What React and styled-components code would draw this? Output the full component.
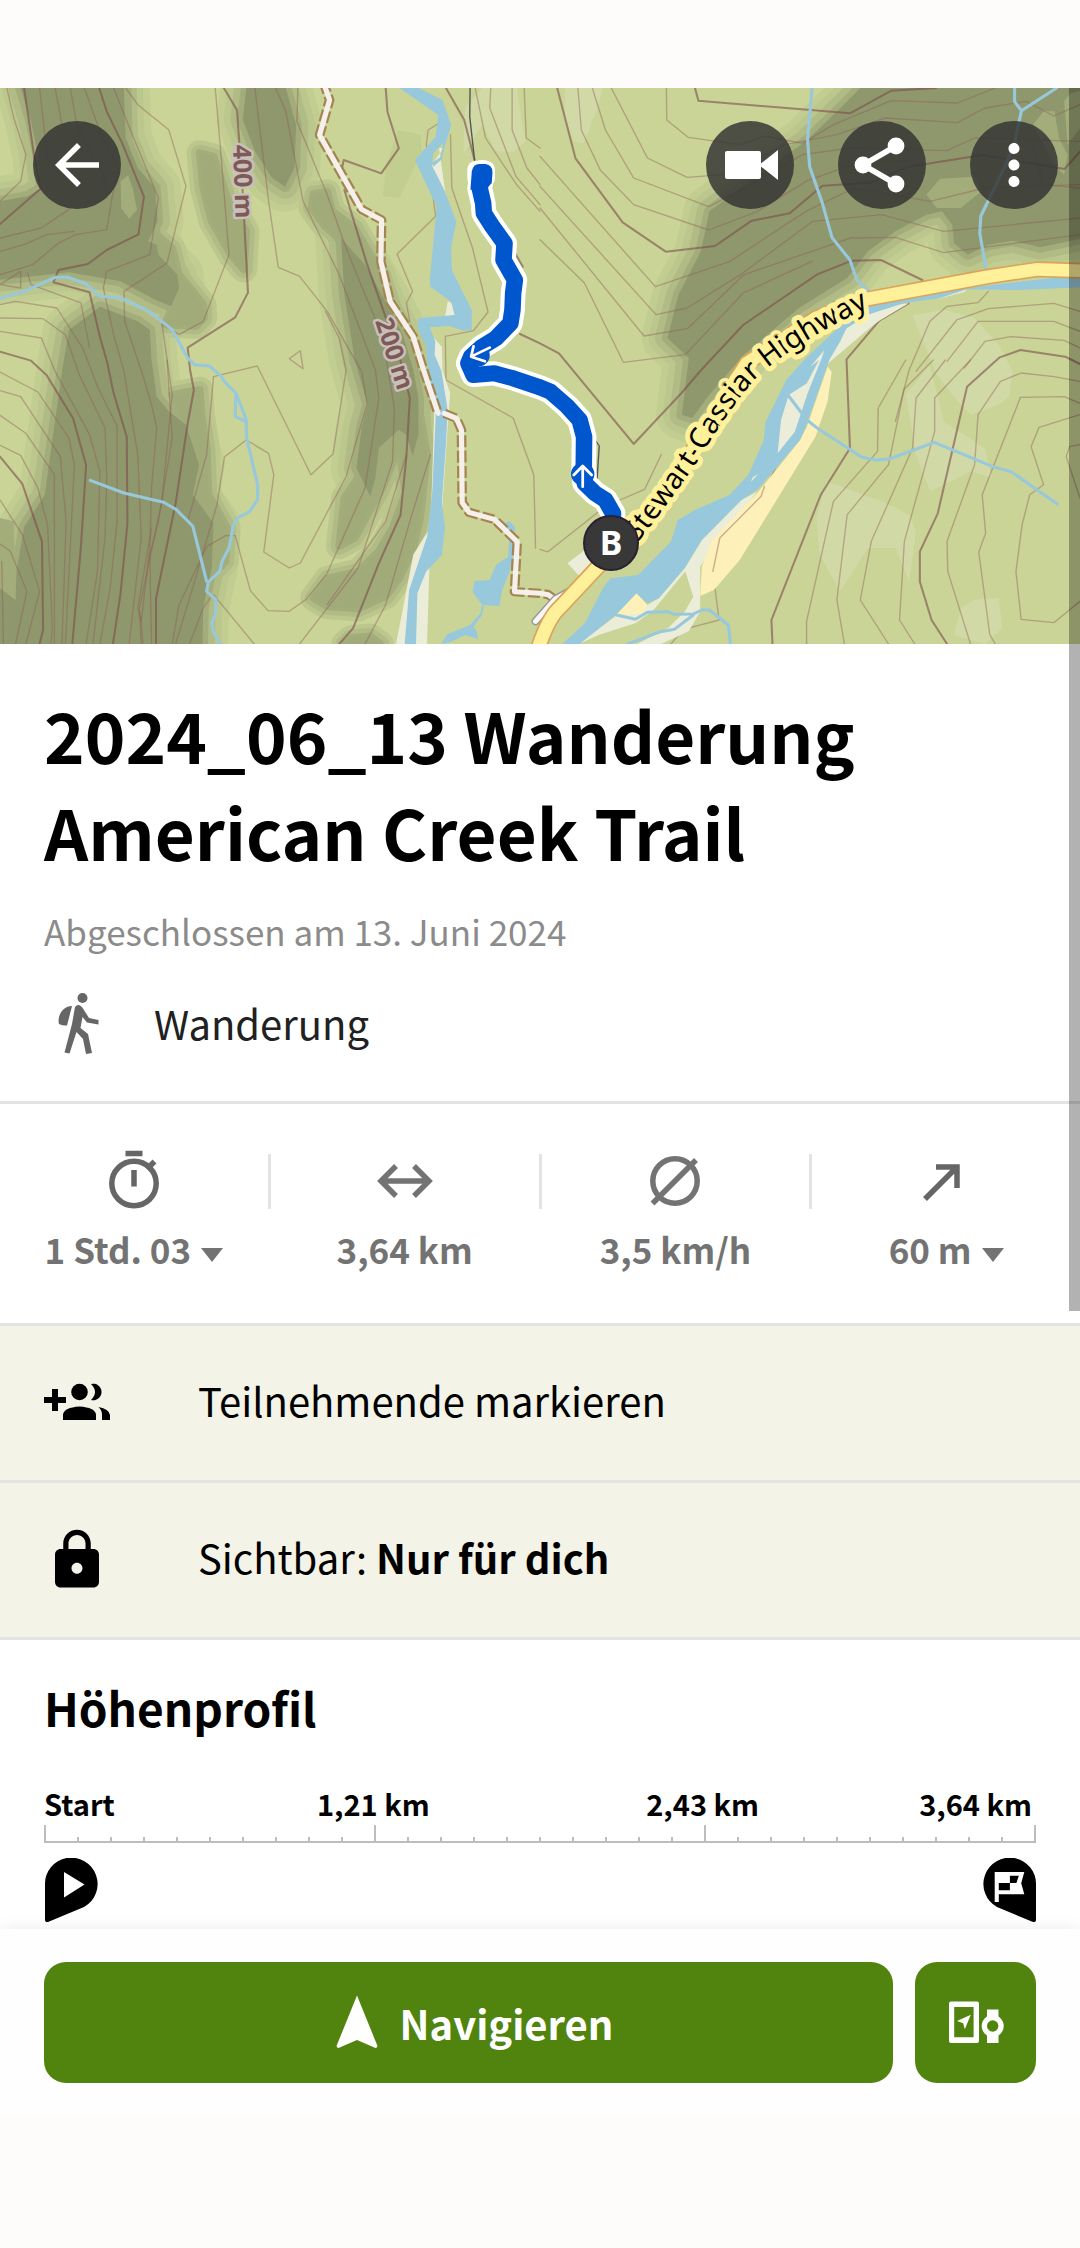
import React from 'react'
import styled, { createGlobalStyle } from 'styled-components'
import { MdArrowBack, MdLock, MdMoreVert } from 'react-icons/md'

const GlobalStyle = createGlobalStyle`
  * {
    box-sizing: border-box;
  }

  body {
    margin: 0;
    background-color: #fdfcfa;
    color: #000;
    font-family: "Noto Sans CJK SC", "Noto Sans", sans-serif;
  }
`

const Screen = styled.main`
  position: relative;
  padding: 88px 0 132px;
`

const Hero = styled.header`
  position: relative;
  height: 556px;
  overflow: hidden;
`

const MapSvg = styled.svg`
  display: block;
  width: 100%;
  height: 100%;
`

const Toolbar = styled.nav`
  position: absolute;
  top: 33px;
  left: 33px;
  right: 22px;
  display: flex;
  gap: 44px;
`

const RoundButton = styled.button`
  display: flex;
  align-items: center;
  justify-content: center;
  width: 88px;
  height: 88px;
  padding: 0;
  margin-right: ${props => props.$push ? "auto" : "0"};
  border: none;
  border-radius: 50%;
  background-color: rgba(52, 52, 52, 0.83);
  color: white;
  cursor: pointer;
`

const ScrollThumb = styled.div`
  position: absolute;
  top: 88px;
  right: 0;
  width: 11px;
  height: 1223px;
  background-color: rgba(0, 0, 0, 0.3);
`

const Info = styled.section`
  padding: 42px 44px 45px;
  background-color: white;
  border-bottom: 3px solid #e3e3e3;
`

const Title = styled.h1`
  max-width: 900px;
  margin: 0;
  font-size: 69px;
  line-height: 97px;
  font-weight: 700;
`

const Finished = styled.p`
  margin: 25px 0 33px;
  color: #8b8b8b;
  font-size: 35px;
  line-height: 52px;
`

const Activity = styled.div`
  display: flex;
  align-items: center;
  gap: 44px;
  color: #212121;
  font-size: 40px;
  line-height: 64px;
`

const Stats = styled.section`
  display: flex;
  padding: 43px 0 44px;
  background-color: white;
  border-bottom: 3px solid #e3e3e3;
  color: #737373;
`

const Stat = styled.div`
  flex: 1;
  display: flex;
  flex-direction: column;
  align-items: center;
  gap: 6px;
`

const StatDivider = styled.div`
  width: 3px;
  height: 55px;
  margin-top: 7px;
  background-color: #e3e3e3;
`

const StatValue = styled.div`
  display: flex;
  align-items: center;
  gap: 10px;
  font-size: 35px;
  line-height: 60px;
  font-weight: 700;
`

const StatButton = styled(StatValue).attrs({ as: "button", type: "button" })`
  padding: 0;
  border: none;
  background: none;
  color: inherit;
  font-family: inherit;
  cursor: pointer;

  svg {
    margin-top: 12px;
  }
`

const Option = styled.button`
  display: flex;
  align-items: center;
  gap: 88px;
  width: 100%;
  height: 157px;
  padding: 0 44px;
  border: none;
  border-bottom: 3px solid #e3e3e3;
  background-color: #f4f3e7;
  color: #000;
  font-family: inherit;
  font-size: 40px;
  line-height: 56px;
  text-align: left;
  cursor: pointer;
`

const OptionText = styled.span`
  padding-bottom: 6px;
`

const Profile = styled.section`
  padding: 35px 44px 7px;
  background-color: white;
`

const SubTitle = styled.h2`
  margin: 0 0 44px;
  font-size: 46px;
  line-height: 64px;
  font-weight: 700;
`

const AxisLabels = styled.div`
  display: grid;
  grid-template-columns: 1fr 2fr 2fr 1fr;
  padding-right: 4px;
  font-size: 29px;
  line-height: 40px;
  font-weight: 700;
  text-align: center;
  white-space: nowrap;

  span:first-child {
    text-align: left;
  }

  span:last-child {
    justify-self: end;
  }
`

const Axis = styled.div`
  display: flex;
  align-items: flex-end;
  justify-content: space-between;
  height: 19px;
  margin-top: 1px;
  border-bottom: 2px solid #bdbdbd;
`

const Tick = styled.div`
  width: 2px;
  height: ${props => props.$major ? "16px" : "4px"};
  background-color: #bdbdbd;
`

const Markers = styled.div`
  display: flex;
  justify-content: space-between;
  margin-top: 15px;
  padding-left: 1px;

  svg {
    display: block;
  }
`

const BottomBar = styled.footer`
  position: relative;
  display: flex;
  gap: 22px;
  padding: 33px 44px;
  background-color: #fefefe;
  box-shadow: 0 0 16px rgba(0, 0, 0, 0.08);
  clip-path: inset(-20px 0 0 0);
`

const GreenButton = styled.button`
  display: flex;
  align-items: center;
  justify-content: center;
  gap: 10px;
  flex: ${props => props.$wide ? "1" : "0 0 121px"};
  height: 121px;
  padding: 0;
  border: none;
  border-radius: 22px;
  background-color: #50840e;
  color: white;
  font-family: inherit;
  font-size: 40px;
  line-height: 56px;
  font-weight: 700;
  cursor: pointer;
`

/* ---------- map data, in terrain units (3136 x 1668) ---------- */

const ridges = [
  "M60 0 L360 0 L365 150 L400 240 L450 300 L458 400 L430 460 L455 470 L460 500 L515 560 L520 600 L497 655 L450 635 L350 580 L200 553 L0 575 L0 340 L80 325 L120 300 L110 200 L90 100Z",
  "M290 656 L400 700 L435 726 L440 816 L455 926 L490 970 L540 1010 L578 1130 L560 1220 L620 1306 L615 1440 L590 1560 L588 1668 L0 1668 L0 1500 L45 1535 L48 1450 L70 1316 L130 1220 L150 1070 L180 850 L200 726Z",
  "M715 0 L830 0 L860 110 L855 240 L828 296 L790 270 L740 190 L705 95Z",
  "M990 450 L1060 530 L1120 640 L1170 740 L1200 846 L1215 930 L1215 1040 L1198 1105 L1180 1040 L1158 1025 L1100 1080 L1090 1170 L1075 1225 L1035 1140 L1050 1020 L1068 950 L1030 816 L1000 620Z",
  "M2498 0 L2450 50 L2340 160 L2190 270 L2060 370 L2035 490 L1970 620 L1938 750 L2000 810 L1980 980 L2010 990 L2060 920 L2160 800 L2320 660 L2460 570 L2520 490 L2600 430 L2690 380 L2735 370 L2765 410 L2770 465 L2810 500 L2870 470 L2940 458 L3020 478 L3150 450 L3150 0Z",
]

const slopes = [
  "M370 0 L375 190 L440 290 L455 440 L500 480 L520 560 L590 650 L592 690 L570 714 L480 710 L500 655 L460 500 L360 240Z",
  "M580 195 L620 205 L660 330 L715 430 L708 545 L670 500 L615 400 L590 300Z",
  "M905 360 L910 318 L950 312 L965 370 L1030 420 L1110 560 L1150 690 L1000 470 L940 410Z",
  "M985 1375 L1030 1350 L1110 1200 L1158 1080 L1178 1215 L1140 1320 L1100 1390 L1040 1450 L950 1472 L910 1530 L950 1555 L1040 1562 L1120 1525 L1160 1470 L1200 1380 L1220 1290 L1240 1100 L1215 950 L1180 1000 L1110 1060 L1000 1230Z",
  "M1000 1668 L1020 1650 L1075 1645 L1105 1668Z",
  "M500 920 L580 905 L585 980 L600 1080 L605 1220 L660 1320 L655 1420 L600 1480 L560 1200 L530 1000Z",
]

const slopeBands = [
  { color: "#c2cd91", width: 150 },
  { color: "#bcc78d", width: 110 },
  { color: "#b1bb85", width: 72 },
  { color: "#a3ad7b", width: 32 },
]

const lightPatches = [
  "M1640 0 L1750 0 L1735 60 L1695 165 L1665 160 L1640 90Z",
  "M1400 0 L1500 0 L1525 160 L1490 192 L1440 190 L1400 110 L1345 200 L1350 60Z",
  "M2650 682 L2740 665 L2830 690 L2900 770 L2940 850 L2930 925 L2900 950 L2820 980 L2780 940 L2720 860Z",
  "M2370 1290 L2400 1180 L2560 1240 L2640 1280 L2660 1330 L2640 1480 L2600 1380 L2520 1380 L2440 1510 L2380 1400Z",
  "M2790 1560 L2830 1535 L2900 1530 L2910 1620 L2860 1668 L2770 1640Z",
  "M2630 920 L2700 830 L2740 1000 L2860 1080 L2880 1170 L2820 1150 L2700 1210 L2660 1100Z",
]

const indexContours = [
  "M70 0 L97 190 L118 302 L0 408",
  "M288 0 L310 71 L355 166 L418 326 L402 439 L310 486 L255 528 L170 546 L155 583 L260 613 L290 746 L312 826 L330 916 L368 1046 L370 1306 L350 1516 L328 1668",
  "M650 0 L688 66 L695 166 L705 316 L712 456 L720 614 L683 688 L545 779 L552 846 L563 906 L545 1006 L510 1246 L453 1531 L453 1668",
  "M0 791 L90 818 L135 861 L212 991 L250 1131 L235 1376 L210 1668",
  "M0 1106 L65 1188 L122 1361 L125 1626 L115 1668",
  "M1000 306 L1065 526 L1160 806 L1190 931 L1180 1106 L1163 1281 L1100 1426 L1025 1621 L985 1668",
  "M1120 0 L1125 71 L1158 181 L1107 256 L998 216 L993 241",
  "M1295 0 L1348 96 L1378 216",
  "M1490 486 L1518 536",
  "M1510 738 L1568 766 L1623 796 L1840 1068 L1978 916 L2036 846 L2158 711 L2373 559 L2473 518 L2558 516 L2678 576",
  "M1618 0 L1671 211 L1808 403 L1933 491 L2076 474 L2183 398 L2293 376 L2388 293 L2528 284 L2638 236 L2853 201 L3091 243 L3136 191",
  "M2018 0 L2028 38 L2468 76 L2588 8 L2718 0",
  "M2638 646 L2553 698 L2458 814 L2468 1081 L2383 1221 L2240 1596 L2243 1668",
  "M3136 828 L3093 806 L2963 786 L2903 808 L2808 896 L2723 1276 L2671 1391 L2671 1481 L2705 1596 L2750 1668",
]

const contours = [
  "M20 0 L40 90 L75 200 L60 280 L0 340",
  "M115 0 L130 140 L140 220",
  "M160 0 L180 110",
  "M204 0 L225 120 L300 260 L310 330 L220 350 L120 420 L0 450",
  "M245 0 L290 130 L345 240 L325 330 L310 425 L220 440 L170 465 L95 530 L0 560",
  "M365 0 L400 50 L490 125 L540 295 L485 525 L360 610 L362 700 L410 846 L440 950 L455 1020 L440 1200 L435 1380 L410 1600 L415 1668",
  "M330 0 L400 180 L460 330 L435 500 L310 550 L300 600 L330 740 L360 850 L400 1100 L410 1350 L375 1668",
  "M0 490 L70 470 L135 440 L215 430",
  "M80 555 L90 590 L235 645 L260 780",
  "M0 590 L60 600 L60 550Z",
  "M0 650 L45 640 L165 660 L240 780 L285 900 L340 1015 L340 1300 L320 1500 L290 1668",
  "M0 690 L125 692 L190 740 L230 860 L305 1020 L310 1170 L305 1350 L270 1668",
  "M0 730 L120 750 L160 850 L260 1040 L290 1150 L283 1450 L250 1668",
  "M0 852 L110 912 L200 1050 L216 1130 L190 1668",
  "M0 908 L60 926 L175 1105 L192 1300 L180 1668",
  "M0 982 L75 1036 L158 1160 L158 1668",
  "M0 1072 L60 1102 L110 1200 L138 1310 L152 1620 L148 1668",
  "M0 1236 L65 1340 L115 1510 L75 1668",
  "M0 1368 L30 1390 L78 1510 L45 1668",
  "M10 1668 L5 1420",
  "M485 816 L500 1050 L460 1300 L435 1400 L440 1668",
  "M625 0 L640 180 L665 500 L590 700 L520 740 L470 706 L500 920 L470 1240 L405 1560 L410 1668",
  "M410 1600 L400 1560 L440 1320",
  "M500 1668 L520 1550 L600 1376 L655 1343 L683 1343 L727 1508 L778 1568 L840 1570 L888 1535 L950 1456 L1060 1200 L1100 930 L1090 846 L985 560 L880 340 L830 70 L800 0",
  "M620 1520 L738 1668",
  "M550 1668 L590 1560 L610 1530",
  "M510 1668 L565 1480 L630 1250 L652 1106 L715 1056 L780 1096 L795 1160 L766 1392 L840 1440 L872 1425 L1005 1166 L1066 948 L1050 850 L950 670 L870 565 L808 538 L780 340 L740 0",
  "M545 1300 L600 1100 L620 866 L747 834 L903 1160 L967 1098 L1005 846 L985 750 L945 670",
  "M865 0 L862 100 L950 320 L1005 480 L1060 620 L1110 740 L1145 960 L1140 1120 L1040 1440 L870 1668",
  "M1180 1100 L1120 1300 L950 1550",
  "M1250 1100 L1190 1300 L1120 1550 L1060 1668",
  "M840 812 L872 788 L880 842Z",
  "M1275 105 L1243 126 L1238 170 L1265 385 L1153 498 L1198 610 L1180 645 L1190 700",
  "M1308 140 L1312 300 L1372 480 L1417 672 L1375 728 L1293 745 L1295 876 L1490 990 L1550 1160 L1555 1380",
  "M1380 0 L1410 150 L1500 290 L1568 370",
  "M1425 0 L1422 60 L1498 265 L1568 350",
  "M1487 0 L1487 126 L1530 240 L1568 290",
  "M1522 0 L1528 150 L1568 180",
  "M1678 0 L1688 126 L1743 246 L1840 350 L2058 426 L2200 370 L2340 280 L2500 220 L2640 220",
  "M1720 0 L1758 126 L1840 270 L2058 356 L2180 290 L2330 200 L2470 180 L2750 188 L2830 150 L3136 160",
  "M1775 0 L1880 210 L1995 268 L2100 260 L2280 170 L2430 140 L2570 90 L2780 104 L2860 60 L2980 40 L3060 84 L3136 50",
  "M1935 0 L1936 96 L1998 148 L2150 170 L2220 144 L2330 166 L2420 110 L2588 38 L2780 45 L2890 0",
  "M1568 205 L1903 596 L2120 520 L2340 370 L2480 300 L2700 340 L2860 300 L3136 290",
  "M1568 295 L1905 680 L1995 660 L2150 560 L2360 400 L2560 380 L2740 430 L3136 390",
  "M1568 360 L1870 744 L1996 722 L2160 560 L2470 450 L2600 448 L2740 494 L3136 440",
  "M1568 455 L1697 585 L1810 823 L1990 800 L2158 615 L2358 520",
  "M2420 640 L2510 660 L2610 620",
  "M3000 180 L3030 290 L3136 300",
  "M2600 1000 L2640 846 L2700 700 L2750 655 L2840 644 L2870 610",
  "M2630 816 L2550 960 L2548 1090 L2420 1240 L2342 1600 L2342 1668",
  "M2710 816 L2625 904 L2580 1130 L2460 1280 L2430 1536 L2452 1668",
  "M2745 816 L2660 930 L2650 1080 L2530 1360 L2498 1536 L2580 1668",
  "M2818 816 L2714 930 L2714 1030 L2626 1360 L2612 1596 L2656 1668",
  "M3136 670 L3060 646 L2870 662 L2778 696 L2660 850",
  "M3136 730 L3060 700 L2840 700 L2750 820",
  "M3136 780 L3090 757 L2935 746 L2860 760 L2800 840",
  "M3136 880 L3060 866 L2965 855 L2905 880 L2840 980 L2830 1130 L2750 1360 L2752 1450 L2818 1668",
  "M3136 946 L3090 926 L2963 928 L2852 1220 L2862 1336 L2842 1392 L2874 1640 L2890 1668",
  "M3136 980 L3017 1018 L2994 1076 L3030 1190 L2990 1220 L2968 1310 L2950 1450 L2965 1594 L3060 1604 L3136 1540",
  "M3136 1070 L3106 1075 L3096 1106 L3136 1230",
  "M1568 1384 L1590 1392 L1740 1270 L1800 1236 L1872 1204 L1920 1100",
  "M2350 816 L2270 1100 L2215 1220 L2090 1350 L2070 1450 L2088 1596 L1985 1624 L1948 1668",
]

const streams = [
  "M0 632 L70 610 L160 568 L195 567 L250 588 L290 625 L350 630 L430 668 L500 725 L545 810 L565 830 L608 834 L640 862 L655 885 L685 915 L715 995 L716 1050 L748 1190 L748 1235 L725 1270 L690 1290 L678 1310 L665 1380 L645 1420 L638 1450 L605 1482 L600 1510 L627 1535 L625 1580 L615 1605 L620 1635 L640 1668",
  "M685 920 L683 985 L712 1000",
  "M262 1177 L360 1215 L475 1243 L512 1265 L560 1315 L600 1480",
  "M1790 1581 L1845 1594 L1880 1573 L1938 1571 L1958 1579 L2013 1578 L2038 1566 L2060 1566 L2115 1611 L2121 1668",
  "M2013 1581 L1958 1624 L1918 1631 L1823 1668",
  "M2288 921 L2343 996 L2378 1024 L2503 1108 L2543 1116 L2583 1113 L2713 1063 L2888 1138 L2936 1151 L3070 1248",
  "M2358 0 L2345 156 L2351 236 L2388 346 L2416 449 L2468 516 L2488 576 L2523 611",
  "M2946 0 L2946 41 L2966 68 L3068 0",
  "M2966 68 L2946 166 L2913 246 L2848 384 L2845 436 L2864 548",
]

const gravel = [
  "M1288 180 L1250 236 L1298 350 L1275 180Z",
  "M1300 640 L1320 650 L1320 690 L1290 700Z",
  "M1260 750 L1283 776 L1285 846 L1307 916 L1300 1016 L1284 1260 L1200 1400 L1150 1668 L1240 1668 L1260 1000Z",
  "M2638 646 L2558 656 L2458 721 L2370 816 L2293 906 L2258 1096 L2308 1031 L2400 830 L2553 696Z",
  "M2198 1211 L2153 1236 L2038 1356 L1988 1441 L1913 1531 L1850 1570 L1788 1584 L1680 1668 L1740 1640 L1845 1606 L1898 1566 L1990 1450 L2013 1526 L1988 1571 L1940 1620 L1850 1668 L1920 1668 L2000 1630 L2033 1571 L2033 1436 L2088 1356Z",
  "M1648 1426 L1698 1386 L1728 1426 L1688 1471Z",
  "M2800 612 L2808 604 L2720 625 L2725 632Z",
]

const sand = [
  "M2403 836 L2415 851 L2403 941 L2368 1046 L2148 1416 L2073 1506 L2033 1524 L2038 1436 L2068 1356 L2198 1216 L2258 1141 L2323 1056 L2343 1016Z",
  "M1848 1516 L1880 1551 L1868 1576 L1788 1581Z",
]

const water = [
  "M1160 0 L1215 0 L1285 36 L1310 111 L1290 180 L1283 214 L1258 236 L1255 224 L1280 206 L1287 165 L1258 195 L1255 234 L1290 306 L1325 401 L1310 476 L1312 546 L1345 616 L1370 666 L1370 726 L1345 728 L1305 714 L1248 718 L1264 761 L1262 800 L1282 850 L1300 966 L1295 1066 L1283 1246 L1292 1316 L1283 1401 L1237 1451 L1212 1516 L1208 1668 L1175 1668 L1188 1506 L1240 1346 L1255 1216 L1265 986 L1240 816 L1238 776 L1212 716 L1215 691 L1320 681 L1310 641 L1250 596 L1248 576 L1268 356 L1205 216 L1265 146 L1273 81Z",
  "M1465 1306 L1480 1300 L1495 1316 L1495 1386 L1478 1456 L1458 1506 L1450 1554 L1405 1551 L1400 1581 L1375 1616 L1385 1631 L1388 1654 L1350 1641 L1310 1661 L1280 1668 L1300 1638 L1365 1611 L1395 1576 L1400 1551 L1372 1511 L1378 1479 L1422 1476 L1440 1431 L1475 1406 L1480 1336Z",
  "M2808 600 L3136 560 L3136 598 L2958 606 L2808 604 L2728 631 L2628 644 L2520 680 L2458 721 L2440 760 L2408 816 L2338 1021 L2323 1056 L2253 1141 L2198 1206 L2153 1236 L2038 1356 L1988 1441 L1913 1531 L1880 1546 L1848 1516 L1788 1581 L1683 1668 L1633 1668 L1698 1606 L1753 1496 L1773 1471 L1853 1461 L1948 1361 L1968 1296 L2018 1266 L2118 1221 L2173 1161 L2218 1056 L2223 1001 L2283 876 L2340 810 L2448 706 L2498 660Z",
]

// light gravel bars lying inside the river bed
const bars = [
  "M2394 786 L2353 836 L2378 816 L2343 886 L2290 921 L2268 996 L2258 1096 L2308 1031 L2345 916 L2384 816Z",
  "M2458 730 L2530 685 L2638 646 L2553 698 L2420 800Z",
  "M2180 1182 L2186 1168 L2202 1158Z",
]

const dirtRoad = "M938 -20 L957 36 L928 141 L1050 364 L1108 396 L1106 521 L1133 641 L1200 746 L1228 840 L1272 976 M1290 976 L1325 991 L1340 1026 L1342 1244 L1362 1273 L1435 1294 L1502 1361 L1494 1511 L1568 1516 L1592 1520 L1613 1536"

const highway = "M3160 549 L3013 544 L2868 566 L2518 633 L2370 690 L2168 826 L2088 956 L1988 1126 L1898 1246 L1818 1346 L1628 1556 Q1590 1590 1560 1690"

const route = "M1400 252 L1393 301 L1403 346 L1405 376 L1430 416 L1465 466 L1462 516 L1495 576 L1490 616 L1488 666 L1482 706 L1440 751 L1400 776 L1368 806 L1360 826 L1375 861 L1435 856 L1490 871 L1568 898 L1598 911 L1648 956 L1683 996 L1696 1046 L1695 1146 L1698 1186 L1728 1216 L1758 1236 L1780 1276 L1776 1366"

const TourMap = () => {
  return (
    <MapSvg viewBox="0 0 1080 556" preserveAspectRatio="xMidYMid slice" role="img" aria-label="Karte">
      <defs>
        <path id="highwayLabel" d="M637 455 Q672 412 705 362 Q726 325 756 290 Q798 252 872 218" />
      </defs>
      <rect width="1080" height="556" fill="#c9d496" />
      <g transform="scale(.34439 .33333)" strokeLinejoin="round" strokeLinecap="round" fill="none">
        <path d="M1155 125 L1220 140 L1225 190 L1160 330 L1112 325 L1120 240Z" fill="#c2ce90" />
        {lightPatches.map(d => <path key={d} d={d} fill="#d1daa6" />)}
        {slopeBands.map(band => (
          <g key={band.color} stroke={band.color} strokeWidth={band.width}>
            {ridges.map(d => <path key={d} d={d} />)}
            {band.width < 120 && slopes.map(d => <path key={d} d={d} strokeWidth={band.width * 0.7} />)}
          </g>
        ))}
        {slopes.map(d => <path key={d} d={d} fill="#a1ab7a" />)}
        {ridges.map(d => <path key={d} d={d} fill="#8f986d" />)}
        <g fill="#a3ad7b">
          <path d="M2690 320 L2730 272 L2830 266 L2850 310 L2790 360 L2720 360Z" />
          <path d="M3000 110 L3030 70 L3062 70 L3075 150 L3100 200 L3090 260 L3060 230Z" />
          <path d="M3090 40 L3110 15 L3136 10 L3136 120 L3100 170Z" />
          <path d="M350 280 L372 262 L385 300 L398 365 L375 392 L352 360Z" />
          <path d="M0 1290 L40 1300 L45 1535 L0 1500Z" />
        </g>
        <g stroke="#8d5a55" strokeOpacity="0.42" strokeWidth="4">
          {contours.map(d => <path key={d} d={d} />)}
        </g>
        <g stroke="#7d4d4b" strokeOpacity="0.6" strokeWidth="6">
          {indexContours.map(d => <path key={d} d={d} />)}
        </g>
        {gravel.map(d => <path key={d} d={d} fill="#ebedd8" />)}
        {sand.map(d => <path key={d} d={d} fill="#fdf0b9" />)}
        {water.map(d => <path key={d} d={d} fill="#97c8dc" />)}
        {bars.map(d => <path key={d} d={d} fill="#ebedd8" />)}
        <g stroke="#97c8dc" strokeWidth="9">
          {streams.map(d => <path key={d} d={d} />)}
        </g>
        <path d="M2220 1195 L2210 1225 L2090 1350 L2070 1450" stroke="#a06a5e" strokeOpacity="0.5" strokeWidth="4" />
        <path d={dirtRoad} stroke="#a4854f" strokeWidth="28" strokeDasharray="36 10" strokeLinecap="butt" />
        <path d={dirtRoad} stroke="#f6f0ec" strokeWidth="15" />
        <path d="M1555 1600 L1613 1533 L1680 1495" stroke="#999" strokeWidth="24" />
        <path d="M1555 1600 L1613 1533 L1680 1495" stroke="#f8f8f8" strokeWidth="15" />
        <path d={highway} stroke="#dca459" strokeWidth="48" />
        <path d={highway} stroke="#fff09a" strokeWidth="38" />
        <path d="M1365 0 L1364 86 L1378 216 M1728 1056 L1740 1074 L1733 1186" stroke="#555" strokeWidth="4" />
        <path d={route} stroke="white" strokeWidth="72" />
        <rect x="1357" y="218" width="80" height="80" rx="26" fill="white" />
        <path d={route} stroke="#0056cc" strokeWidth="48" />
        <path d="M1392 228 L1410 228 Q1430 232 1430 252 L1428 285 L1410 305 L1366 305 L1370 250 Q1374 228 1392 228Z" fill="#0056cc" />
        <circle cx="1388" cy="802" r="34" fill="#0056cc" />
        <circle cx="1692" cy="1158" r="34" fill="#0056cc" />
        <g stroke="white" strokeWidth="8">
          <path d="M1422 779 L1368 806 M1375 775 L1368 806 L1408 820" />
          <path d="M1692 1196 L1692 1134 M1666 1161 L1692 1134 L1718 1161" />
        </g>
      </g>
      <g fontFamily="Noto Sans" strokeLinejoin="round" paintOrder="stroke">
        <g fontSize="25" fontWeight="700" fill="#7d5a56" stroke="#c9bfbb" strokeWidth="5">
          <text transform="translate(233 57) rotate(88)">400 m</text>
          <text transform="translate(375 233) rotate(72)">200 m</text>
        </g>
        <text fontSize="29" fill="#000" stroke="#fff09a" strokeWidth="10">
          <textPath href="#highwayLabel">Stewart-Cassiar Highway</textPath>
        </text>
      </g>
      <circle cx="611" cy="455" r="27" fill="#383838" stroke="#2a2033" strokeWidth="2" />
      <text x="611" y="467" textAnchor="middle" fontFamily="Noto Sans" fontSize="34" fontWeight="700" fill="white">B</text>
    </MapSvg>
  )
}

const Icon = ({ children, ...rest }) => (
  <svg width="66" height="66" viewBox="0 0 66 66" fill="none" aria-hidden="true" {...rest}>
    {children}
  </svg>
)

const VideoIcon = () => (
  <Icon fill="currentColor">
    <rect x="8" y="19" width="36" height="28" rx="2" />
    <path d="M42 33 L61 18 V48Z" />
  </Icon>
)

const ShareIcon = () => (
  <Icon fill="currentColor">
    <path d="M47 14 L14 33 L47 52" fill="none" stroke="currentColor" strokeWidth="5.5" />
    <circle cx="47" cy="14" r="8.4" />
    <circle cx="14" cy="33" r="8.4" />
    <circle cx="47" cy="52" r="8.4" />
  </Icon>
)

const HikerIcon = () => (
  <Icon fill="#666">
    <circle cx="38.5" cy="8" r="5" />
    <path d="M28 16 C18 16 13 27 15 34 Q19 36 23 35.500Z" />
    <path d="M31 17 Q34 13 38 17 L45 28 L54.500 30 L54.500 34.500 L43 32.500 L38.500 27 L36.500 38 L44 44 L48 63 L42 64 L39 49 L32.500 42 L25.500 63.500 L20.500 62.500 L28 34Z" />
  </Icon>
)

const TimerIcon = () => (
  <Icon stroke="#666" strokeWidth="5.5">
    <circle cx="33" cy="36.500" r="22.200" />
    <path d="M24.500 6.500 H41.500 M33 23 V39.500 M46 22 L53.500 14.500" />
  </Icon>
)

const DistanceIcon = () => (
  <Icon stroke="#737373" strokeWidth="5.5">
    <path d="M9 34 H57 M24 19 L9 34 L24 49 M42 19 L57 34 L42 49" />
  </Icon>
)

const AverageIcon = () => (
  <Icon stroke="#737373" strokeWidth="5.5">
    <circle cx="33" cy="34" r="22.200" />
    <path d="M10.500 56.500 L54 13" />
  </Icon>
)

const AscentIcon = () => (
  <Icon stroke="#666" strokeWidth="5.5">
    <path d="M23 20 H44 V41 M44 20 L12 52" />
  </Icon>
)

const Caret = () => (
  <svg width="22" height="14" viewBox="0 0 22 14" aria-hidden="true">
    <path d="M0 0 H22 L11 14Z" fill="#737373" />
  </svg>
)

const AddGroupIcon = () => (
  <Icon fill="currentColor" viewBox="0 3 66 66">
    <path d="M8 22 H14 V30 H22 V36 H14 V44 H8 V36 H0 V30 H8Z" />
    <circle cx="35.500" cy="25" r="8.300" />
    <path d="M47 17 A8.300 8.300 0 1 1 47 33 Q55 25 47 17Z" />
    <path d="M19 53 V47.500 Q20 40.500 35.500 39.500 Q51 40.500 52 47.500 V53Z" />
    <path d="M54.500 40 Q65 42 66 48 V53 H58 V48 Q58 43 54.500 40Z" />
  </Icon>
)

const StartPin = () => (
  <svg width="53" height="64" viewBox="0 0 53 64" aria-label="Start" role="img">
    <path d="M0 26.500 A26.300 26.300 0 1 1 39 49 L3 64 Q0 64.500 0 62Z" />
    <path d="M19 14 L39.500 26.500 L19 39.500Z" fill="white" />
  </svg>
)

const FinishPin = () => (
  <svg width="53" height="64" viewBox="0 0 53 64" aria-label="Ziel" role="img">
    <path d="M53 26.500 A26.300 26.300 0 1 0 14 49 L50 64 Q53 64.500 53 62Z" />
    <path d="M11.700 14 H41.300 L38.200 25.300 L41.300 36.300 H15.800 V44 H11.700Z" fill="white" />
    <path d="M26.900 17.700 H35.800 L33.400 25 H26.900Z M15.800 25 H26.900 V32.300 H15.800Z" />
  </svg>
)

const NavigateIcon = () => (
  <Icon fill="currentColor">
    <path d="M33 5.500 L53.500 56 Q53 58 51.500 58 L33 50 L14.500 58 Q13 58 12.500 56Z" />
  </Icon>
)

const DevicesIcon = () => (
  <Icon fill="currentColor" viewBox="3 0 66 66">
    <path fillRule="evenodd" d="M11 11.500 H37 Q39 11.500 39 13.500 V51 Q39 53 37 53 H11 Q9 53 9 51 V13.500 Q9 11.500 11 11.500Z M14.200 17 V47.300 H33.600 V17Z" />
    <path d="M30.800 24.800 L17 31 L23.200 33.300 L24.800 39.300Z" />
    <path d="M47 19.500 H58.500 V53 H47Z" />
    <circle cx="52.700" cy="36" r="11" />
    <circle cx="52.700" cy="36" r="5.700" fill="#50840e" />
  </Icon>
)

const stats = [
  { icon: <TimerIcon />, value: "1 Std. 03", more: true },
  { icon: <DistanceIcon />, value: "3,64 km" },
  { icon: <AverageIcon />, value: "3,5 km/h" },
  { icon: <AscentIcon />, value: "60 m", more: true },
]

const ticks = Array.from({ length: 31 }, (_, i) => i)

const App = () => {
  return (
    <>
      <GlobalStyle />
      <Screen>
        <Hero>
          <TourMap />
          <Toolbar>
            <RoundButton $push aria-label="Zurück"><MdArrowBack size={66} /></RoundButton>
            <RoundButton aria-label="Video"><VideoIcon /></RoundButton>
            <RoundButton aria-label="Teilen"><ShareIcon /></RoundButton>
            <RoundButton aria-label="Mehr"><MdMoreVert size={66} /></RoundButton>
          </Toolbar>
        </Hero>
        <Info>
          <Title>2024_06_13 Wanderung American Creek Trail</Title>
          <Finished>Abgeschlossen am 13. Juni 2024</Finished>
          <Activity>
            <HikerIcon />
            <span>Wanderung</span>
          </Activity>
        </Info>
        <Stats>
          {stats.map((stat, i) => (
            <React.Fragment key={stat.value}>
              {i > 0 && <StatDivider />}
              <Stat>
                {stat.icon}
                {stat.more
                  ? <StatButton>{stat.value}<Caret /></StatButton>
                  : <StatValue>{stat.value}</StatValue>}
              </Stat>
            </React.Fragment>
          ))}
        </Stats>
        <Option>
          <AddGroupIcon />
          <OptionText>Teilnehmende markieren</OptionText>
        </Option>
        <Option>
          <MdLock size={66} />
          <OptionText>Sichtbar: <b>Nur für dich</b></OptionText>
        </Option>
        <Profile>
          <SubTitle>Höhenprofil</SubTitle>
          <AxisLabels>
            <span>Start</span>
            <span>1,21 km</span>
            <span>2,43 km</span>
            <span>3,64 km</span>
          </AxisLabels>
          <Axis>
            {ticks.map(i => <Tick key={i} $major={i % 10 === 0} />)}
          </Axis>
          <Markers>
            <StartPin />
            <FinishPin />
          </Markers>
        </Profile>
        <BottomBar>
          <GreenButton $wide><NavigateIcon />Navigieren</GreenButton>
          <GreenButton aria-label="An Gerät senden"><DevicesIcon /></GreenButton>
        </BottomBar>
        <ScrollThumb />
      </Screen>
    </>
  )
}

export default App
